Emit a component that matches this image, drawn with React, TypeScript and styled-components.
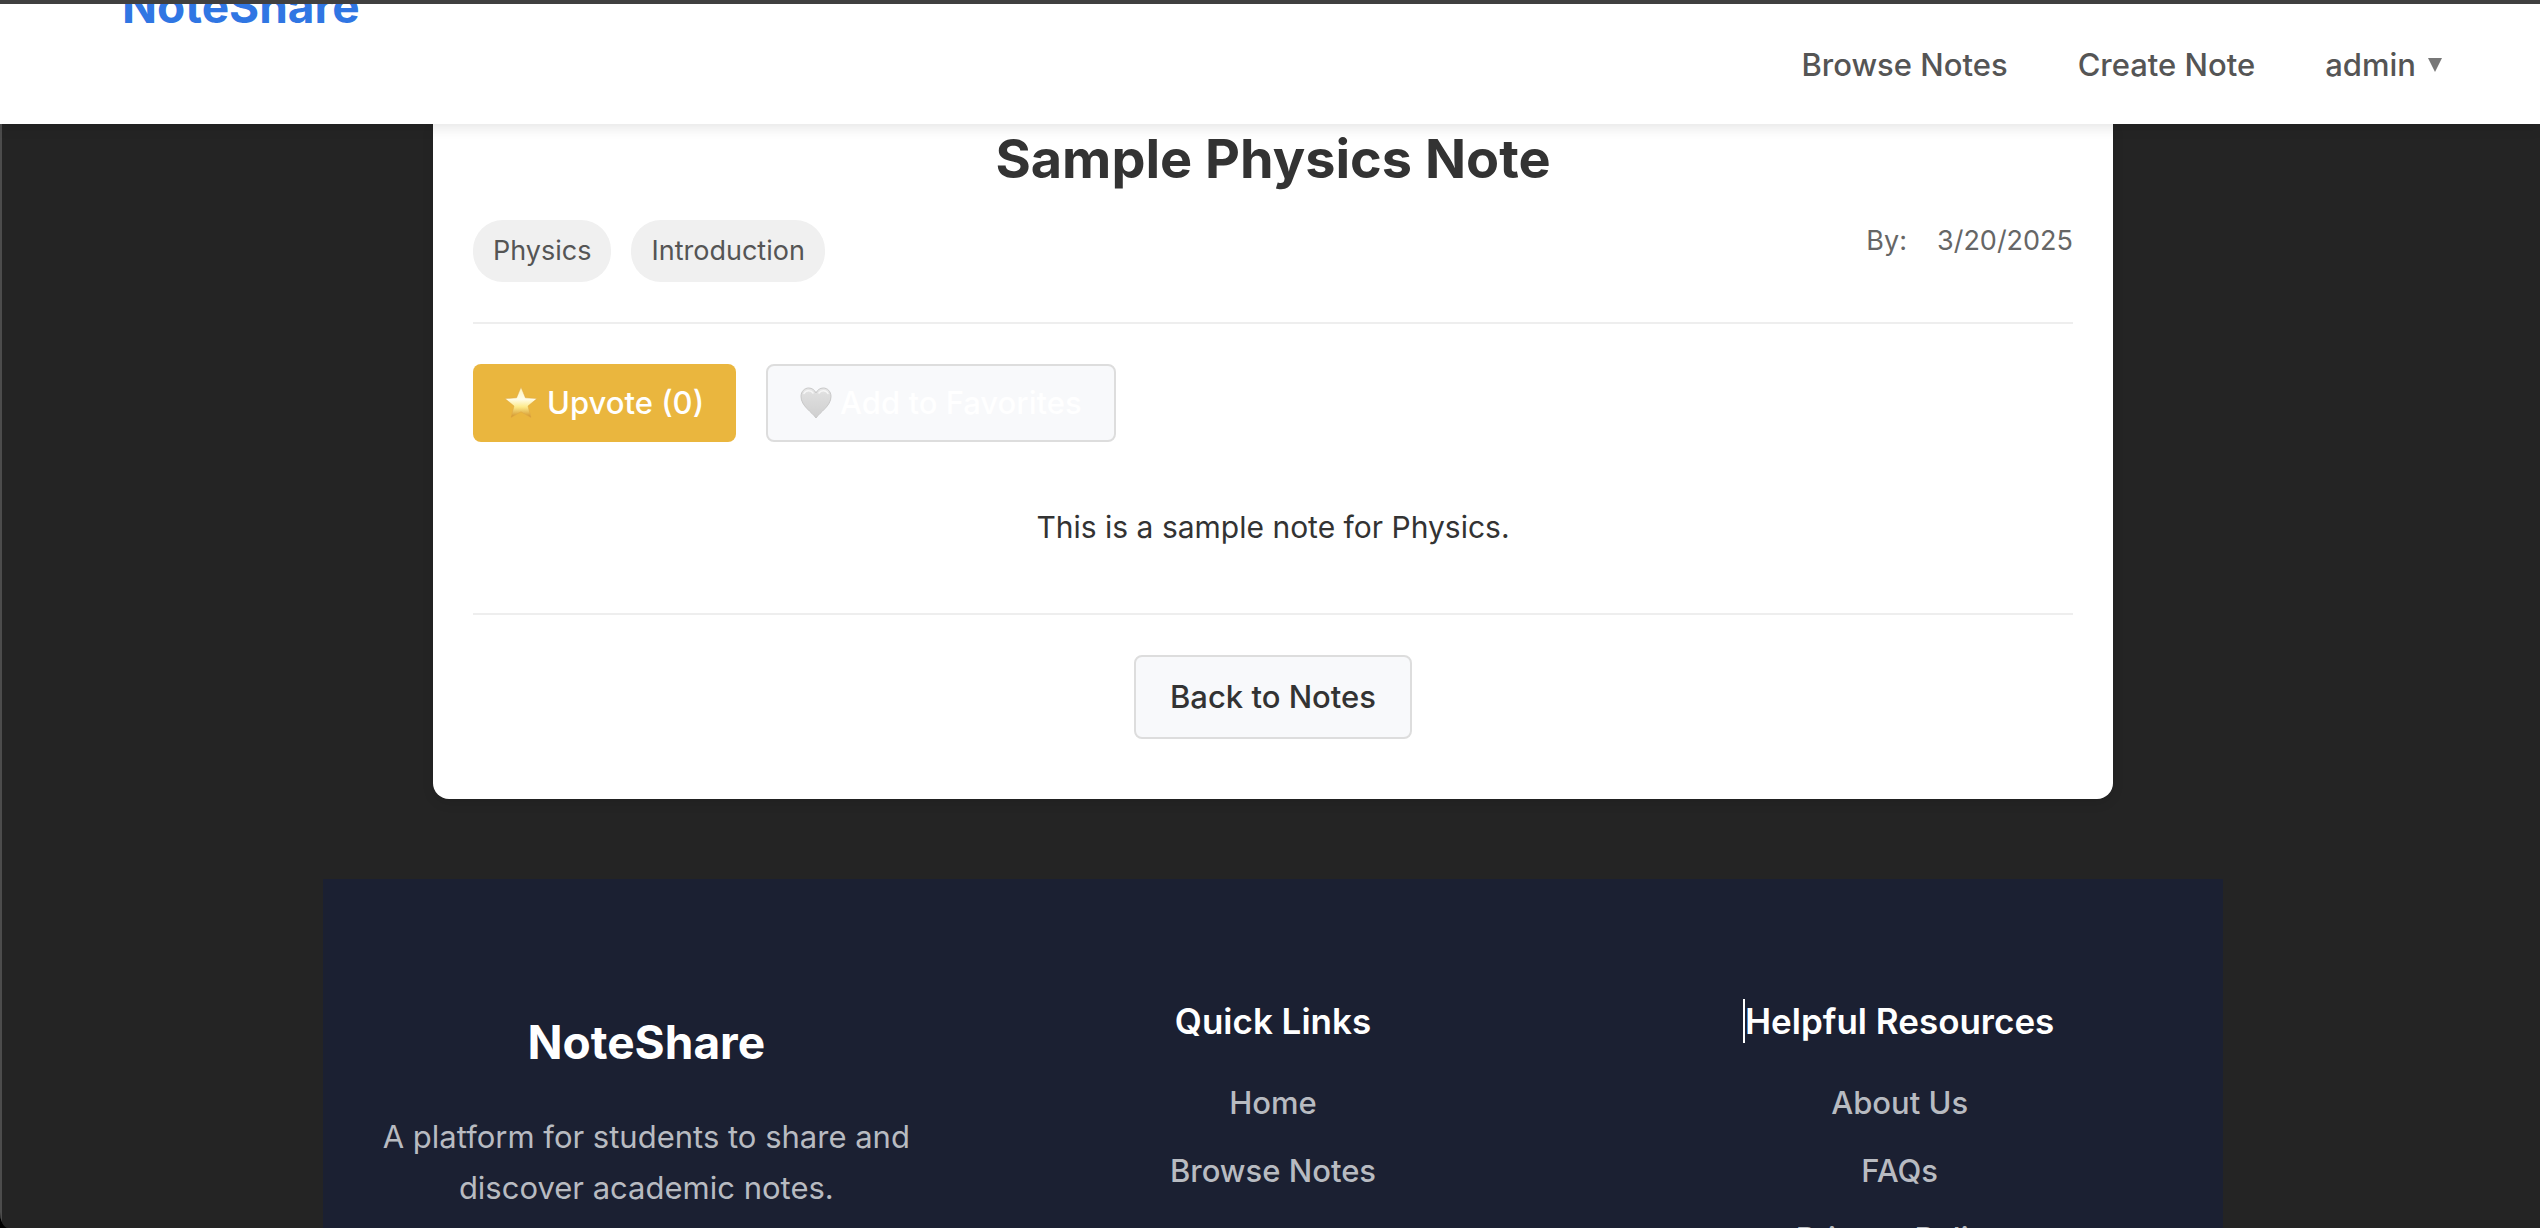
import React from 'react';
import styled, { createGlobalStyle } from 'styled-components';

const GlobalStyle = createGlobalStyle`
  *, *::before, *::after { box-sizing: border-box; }
  body {
    margin: 0;
    background: #000;
    font-family: Inter, "Liberation Sans", sans-serif;
    font-size: 31px;
    color: #333;
    -webkit-font-smoothing: antialiased;
  }
  h1, h2, h3, p, ul { margin: 0; padding: 0; }
  ul { list-style: none; }
  a { color: inherit; text-decoration: none; }
`;

const Shell = styled.div`
  height: 100vh;
  overflow: hidden;
  border-top: 4px solid #404040;
  border-bottom-left-radius: 8px 16px;
  background: #242424;
`;

const Header = styled.header`
  position: relative;
  z-index: 1;
  display: flex;
  justify-content: space-between;
  align-items: center;
  height: 120px;
  padding: 2px 98px 0 122px;
  overflow: hidden;
  background: #fff;
  box-shadow: 0 4px 12px rgba(0, 0, 0, 0.1);
`;

const HeaderLogo = styled.a`
  align-self: flex-start;
  margin-top: -30px;
  font-size: 46px;
  line-height: 60px;
  font-weight: 700;
  color: #3076e3;
`;

const Nav = styled.nav`
  display: flex;
  align-items: center;
  gap: 70px;
  font-weight: 500;
  line-height: 40px;
  color: #555;
`;

const UserMenu = styled.button`
  display: flex;
  align-items: center;
  gap: 12px;
  padding: 0;
  border: 0;
  background: none;
  font: inherit;
  color: inherit;
`;

const Caret = styled.svg`
  width: 14px;
  height: 14px;
  fill: #777;
`;

const Body = styled.div`
  padding-left: 4px;
  border-left: 2px solid #4c4c4c;
  min-height: 100%;
`;

const Card = styled.main`
  max-width: 1680px;
  margin: 0 auto 80px;
  padding: 0 40px 60px;
  border-radius: 0 0 16px 16px;
  background: #fff;
  box-shadow: 0 4px 12px rgba(0, 0, 0, 0.1);
`;

const Title = styled.h1`
  padding-bottom: 26px;
  font-size: 54px;
  line-height: 70px;
  font-weight: 700;
  text-align: center;
`;

const Meta = styled.div`
  display: flex;
  justify-content: space-between;
  padding-bottom: 40px;
  border-bottom: 2px solid #eee;
  font-size: 27px;
  line-height: 42px;
`;

const Tags = styled.ul`
  display: flex;
  gap: 20px;
`;

const Tag = styled.li`
  padding: 10px 20px;
  border-radius: 30px;
  background: #f0f0f0;
  color: #555;
`;

const Byline = styled.div`
  display: flex;
  gap: 30px;
  color: #666;
`;

const Actions = styled.div`
  display: flex;
  gap: 30px;
  padding: 40px 0;
`;

const Button = styled.button`
  display: inline-flex;
  align-items: center;
  gap: 8px;
  padding: 18px 32px;
  border: 2px solid #ddd;
  border-radius: 8px;
  background: #f8f9fb;
  font: inherit;
  font-weight: 500;
  line-height: 38px;
  color: #333;
`;

const UpvoteButton = styled(Button)`
  gap: 10px;
  padding: 20px 32px;
  border: 0;
  background: #eab63e;
  color: #fff;
`;

const FavoriteButton = styled(Button)`
  color: #fff;
`;

const BackButton = styled(Button)`
  padding: 20px 34px;
  line-height: 40px;
`;

const Emoji = styled.svg`
  width: 32px;
  height: 32px;
`;

const Content = styled.p`
  padding: 20px 0 60px;
  border-bottom: 2px solid #eee;
  font-size: 30px;
  line-height: 51px;
  text-align: center;
`;

const Back = styled.div`
  display: flex;
  justify-content: center;
  padding-top: 40px;
`;

const Footer = styled.footer`
  display: grid;
  grid-template-columns: repeat(3, 1fr);
  gap: 80px;
  max-width: 1900px;
  margin: 0 auto;
  padding: 120px 50px;
  background: #1b2032;
  color: #b8bbc1;
  text-align: center;
`;

const FooterLogo = styled.h2`
  padding: 14px 0 40px;
  font-size: 46px;
  line-height: 58px;
  font-weight: 700;
  color: #fff;
`;

const Blurb = styled.p`
  line-height: 51px;
`;

const ColumnTitle = styled.h3`
  display: inline-block;
  margin-bottom: 40px;
  font-size: 35px;
  line-height: 44px;
  font-weight: 600;
  color: #fff;
`;

const CursorTitle = styled(ColumnTitle)`
  box-shadow: -2px 0 0 #fff;
`;

const Links = styled.ul`
  display: flex;
  flex-direction: column;
  gap: 28px;
  font-weight: 500;
  line-height: 40px;
`;

const Star = () => (
  <Emoji viewBox="0 0 32 32" aria-hidden="true">
    <defs>
      <linearGradient id="star" x1="0" y1="0" x2="0" y2="1">
        <stop offset="0" stopColor="#fff3b8" />
        <stop offset="0.4" stopColor="#fffde8" />
        <stop offset="0.65" stopColor="#fdea8a" />
        <stop offset="1" stopColor="#d08f24" />
      </linearGradient>
    </defs>
    <path
      d="M16 0l4.400 10.800 11.600.8-9 7.400 3 11.600L16 24.800 6 30.600 9 19 0 11.600l11.600-.8z"
      fill="url(#star)"
      stroke="#dfa645"
      strokeWidth="0.5"
      strokeLinejoin="round"
    />
  </Emoji>
);

const Heart = () => (
  <Emoji viewBox="0 0 32 32" aria-hidden="true">
    <defs>
      <linearGradient id="heart" x1="0" y1="0" x2="0" y2="1">
        <stop offset="0" stopColor="#e9e9e9" />
        <stop offset="0.2" stopColor="#dedede" />
        <stop offset="1" stopColor="#cfcfcf" />
      </linearGradient>
    </defs>
    <path
      d="M16 31C12 25 1 19 1 9.500 1 4.500 4.500 1 8.700 1 12 1 14.700 3 16 6c1.300-3 4-5 7.300-5C27.500 1 31 4.500 31 9.500 31 19 20 25 16 31z"
      fill="url(#heart)"
      stroke="#c8c8c8"
      strokeWidth="1"
    />
    <path d="M4 6.500C5.500 3.200 11 2.600 13 6M19 6c2-3.400 7.500-2.800 9 .5" fill="none" stroke="#f6f6f6" strokeWidth="1.500" strokeLinecap="round" />
  </Emoji>
);

export default function App() {
  return (
    <>
      <GlobalStyle />
      <Shell>
        <Header>
          <HeaderLogo href="#">NoteShare</HeaderLogo>
          <Nav>
            <a href="#browse">Browse Notes</a>
            <a href="#create">Create Note</a>
            <UserMenu type="button">
              admin
              <Caret viewBox="0 0 14 14" aria-hidden="true">
                <path d="M0 0h14L7 14z" />
              </Caret>
            </UserMenu>
          </Nav>
        </Header>
        <Body>
          <Card>
            <Title>Sample Physics Note</Title>
            <Meta>
              <Tags>
                <Tag>Physics</Tag>
                <Tag>Introduction</Tag>
              </Tags>
              <Byline>
                <span>By:</span>
                <span>3/20/2025</span>
              </Byline>
            </Meta>
            <Actions>
              <UpvoteButton type="button">
                <Star />
                Upvote (0)
              </UpvoteButton>
              <FavoriteButton type="button">
                <Heart />
                Add to Favorites
              </FavoriteButton>
            </Actions>
            <Content>This is a sample note for Physics.</Content>
            <Back>
              <BackButton type="button">Back to Notes</BackButton>
            </Back>
          </Card>
          <Footer>
            <section>
              <FooterLogo>NoteShare</FooterLogo>
              <Blurb>A platform for students to share and discover academic notes.</Blurb>
            </section>
            <section>
              <ColumnTitle>Quick Links</ColumnTitle>
              <Links>
                <li><a href="#home">Home</a></li>
                <li><a href="#browse">Browse Notes</a></li>
              </Links>
            </section>
            <section>
              <CursorTitle>Helpful Resources</CursorTitle>
              <Links>
                <li><a href="#about">About Us</a></li>
                <li><a href="#faqs">FAQs</a></li>
                <li><a href="#privacy">Privacy Policy</a></li>
              </Links>
            </section>
          </Footer>
        </Body>
      </Shell>
    </>
  );
}
